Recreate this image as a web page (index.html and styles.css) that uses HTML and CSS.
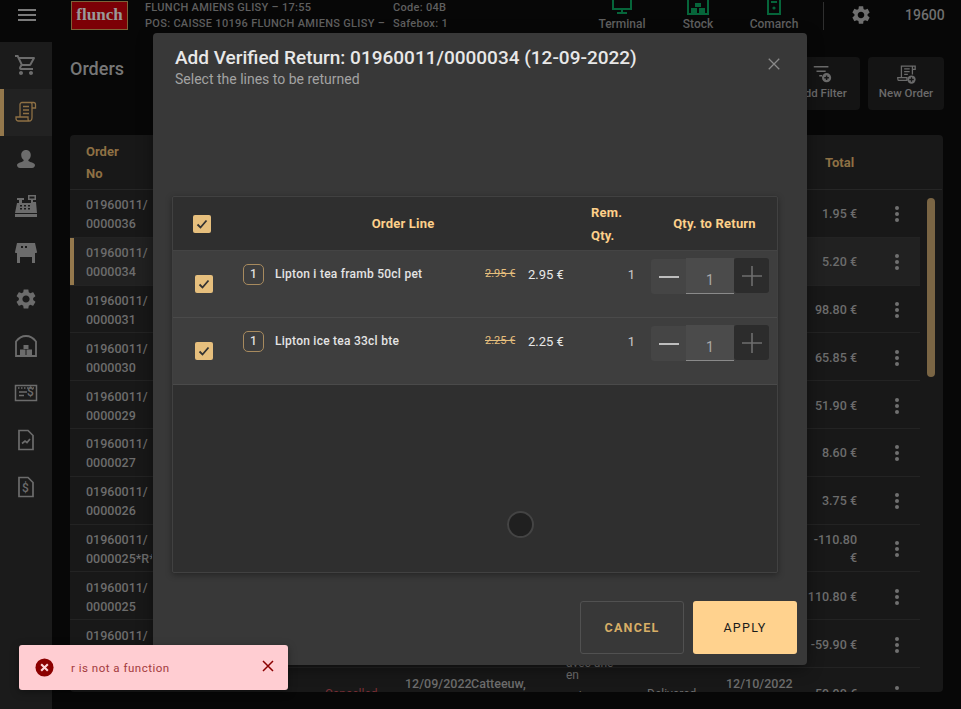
FILE: index.html
```html
<!DOCTYPE html>
<html lang="en">
<head>
<meta charset="utf-8">
<title>Orders</title>
<link rel="stylesheet" href="styles.css">
</head>
<body>
<div class="app">
  <header class="topbar">
    <div class="burger"><span></span><span></span><span></span></div>
    <div class="logo">flunch</div>
    <div class="pos">
      <div class="pos-line"><span class="pos-a">FLUNCH AMIENS GLISY – 17:55</span><span>Code: 04B</span></div>
      <div class="pos-line"><span class="pos-a">POS: CAISSE 10196 FLUNCH AMIENS GLISY –</span><span>Safebox: 1</span></div>
    </div>
    <div class="status-group">
      <div class="status">
        <svg class="status-icon" viewBox="0 0 24 24"><path d="M3 2h18v15H3zM12 17v3M7 21h10" fill="none" stroke="currentColor" stroke-width="2"/></svg>
        <span class="status-label">Terminal</span>
      </div>
      <div class="status">
        <svg class="status-icon" viewBox="0 0 24 24"><path d="M2 22V6l10-4 10 4v16z" fill="none" stroke="currentColor" stroke-width="2"/><path d="M9 11h6v4H9zM5 16h6v5H5zM13 16h6v5h-6z" fill="currentColor"/></svg>
        <span class="status-label">Stock Server</span>
      </div>
      <div class="status">
        <svg class="status-icon" viewBox="0 0 24 24"><path d="M6 1h12v21H6zM9 6h6M9 10h6" fill="none" stroke="currentColor" stroke-width="2"/><circle cx="12" cy="16" r="1.6" fill="currentColor"/></svg>
        <span class="status-label">Comarch Server</span>
      </div>
    </div>
    <div class="divider"></div>
    <svg class="top-gear" viewBox="0 0 24 24"><path fill="currentColor" d="M19.14 12.94c.04-.3.06-.61.06-.94 0-.32-.02-.64-.07-.94l2.03-1.58c.18-.14.23-.41.12-.61l-1.92-3.32c-.12-.22-.37-.29-.59-.22l-2.39.96c-.5-.38-1.03-.7-1.62-.94l-.36-2.54c-.04-.24-.24-.41-.48-.41h-3.84c-.24 0-.43.17-.47.41l-.36 2.54c-.59.24-1.13.57-1.62.94l-2.39-.96c-.22-.08-.47 0-.59.22L2.74 8.87c-.12.21-.08.47.12.61l2.03 1.58c-.05.3-.09.63-.09.94s.02.64.07.94l-2.03 1.58c-.18.14-.23.41-.12.61l1.92 3.32c.12.22.37.29.59.22l2.39-.96c.5.38 1.03.7 1.62.94l.36 2.54c.05.24.24.41.48.41h3.84c.24 0 .44-.17.47-.41l.36-2.54c.59-.24 1.13-.56 1.62-.94l2.39.96c.22.08.47 0 .59-.22l1.92-3.32c.12-.22.07-.47-.12-.61l-2.01-1.58zM12 15.6c-1.98 0-3.6-1.62-3.6-3.6s1.62-3.6 3.6-3.6 3.6 1.62 3.6 3.6-1.62 3.6-3.6 3.6z"/></svg>
    <div class="user">19600</div>
  </header>

  <div class="body">
    <nav class="sidebar">
      <div class="nav-item"><svg viewBox="0 0 24 24"><path fill="currentColor" d="M15.55 13c.75 0 1.41-.41 1.75-1.03l3.58-6.49c.37-.66-.11-1.48-.87-1.48H5.21l-.94-2H1v2h2l3.6 7.59-1.35 2.44C4.52 15.37 5.48 17 7 17h12v-2H7l1.1-2h7.45zM6.16 6h12.15l-2.76 5H8.53L6.16 6zM7 18c-1.1 0-1.99.9-1.99 2S5.9 22 7 22s2-.9 2-2-.9-2-2-2zm10 0c-1.1 0-1.99.9-1.99 2s.89 2 1.99 2 2-.9 2-2-.9-2-2-2z"/></svg></div>
      <div class="nav-item active"><svg viewBox="0 0 24 24" fill="none" stroke="currentColor" stroke-width="1.3"><path d="M6 17V4.500C6 3.400 6.900 2.500 8 2.500h11.500c1.200 0 2 .9 2 2V8H18V4.500c0-1-.6-2-1.500-2M18 4.500V17.500c0 2-1 3.500-3 3.500H4.500C3 21 2 20 2 18.500V17h12v1.500c0 1 .6 2.500 1.500 2.500"/><path d="M9 6.500h6M9 10h6M9 13.500h6"/></svg></div>
      <div class="nav-item"><svg viewBox="0 0 24 24"><path fill="currentColor" d="M12 3c3 0 4.800 2.300 4.800 5 0 2.200-1 4-2.500 5 0 1 .7 1.500 2 2 2.400.8 4.700 1.500 4.700 3 0 1.500-1 3-3 3H6c-2 0-3-1.500-3-3 0-1.500 2.300-2.200 4.700-3 1.300-.5 2-1 2-2-1.500-1-2.500-2.800-2.500-5C7.200 5.300 9 3 12 3z"/></svg></div>
      <div class="nav-item"><svg viewBox="0 0 24 24"><path fill="currentColor" d="M14 1h8v5h-3v2h3l1 11H1L3 9h2V6H3V4h7v2H8v3h9V6h-3zM15.500 2.500v2h5v-2zM6 11v1.500h2V11zM10 11v1.500h2V11zM14 11v1.500h2V11zM6 14v1.500h2V14zM10 14v1.500h2V14zM14 14v1.500h2V14zM1 20h22v3H1z"/></svg></div>
      <div class="nav-item"><svg viewBox="0 0 24 24"><path fill="currentColor" d="M3 2h18l2 9c0 .6-.5 1-1 1h-1v10h-3v-6H6v6H3V12H2c-.5 0-1-.4-1-1zM7 5v2h2V5zM11 5v2h2V5z"/></svg></div>
      <div class="nav-item"><svg viewBox="0 0 24 24"><path fill="currentColor" d="M19.14 12.94c.04-.3.06-.61.06-.94 0-.32-.02-.64-.07-.94l2.03-1.58c.18-.14.23-.41.12-.61l-1.92-3.32c-.12-.22-.37-.29-.59-.22l-2.39.96c-.5-.38-1.03-.7-1.62-.94l-.36-2.54c-.04-.24-.24-.41-.48-.41h-3.84c-.24 0-.43.17-.47.41l-.36 2.54c-.59.24-1.13.57-1.62.94l-2.39-.96c-.22-.08-.47 0-.59.22L2.74 8.87c-.12.21-.08.47.12.61l2.03 1.58c-.05.3-.09.63-.09.94s.02.64.07.94l-2.03 1.58c-.18.14-.23.41-.12.61l1.92 3.32c.12.22.37.29.59.22l2.39-.96c.5.38 1.03.7 1.62.94l.36 2.54c.05.24.24.41.48.41h3.84c.24 0 .44-.17.47-.41l.36-2.54c.59-.24 1.13-.56 1.62-.94l2.39.96c.22.08.47 0 .59-.22l1.92-3.32c.12-.22.07-.47-.12-.61l-2.01-1.58zM12 15.6c-1.98 0-3.6-1.62-3.6-3.6s1.62-3.6 3.6-3.6 3.6 1.62 3.6 3.6-1.62 3.6-3.6 3.6z"/></svg></div>
      <div class="nav-item"><svg viewBox="0 0 24 24"><path d="M2 22V7.500C5 3.500 8.500 2 12 2s7 1.500 10 5.500V22z" fill="none" stroke="currentColor" stroke-width="1.800"/><path d="M9.500 11h5v4h-5zM6 15.500h5.500V21H6zM12.500 15.500H18V21h-5.500z" fill="currentColor"/></svg></div>
      <div class="nav-item"><svg viewBox="0 0 24 24" fill="none" stroke="currentColor" stroke-width="1.500"><path d="M1.500 4.500h21v15h-21z"/><path d="M5 11h8M5 14.500h5"/><path d="M4 7h16" stroke-dasharray="1.500 1.500"/></svg><span class="nav-dollar">$</span></div>
      <div class="nav-item"><svg viewBox="0 0 24 24" fill="none" stroke="currentColor" stroke-width="1.700"><path d="M5 2.500h9l5 5v14H5z"/><path d="M8 15.500l3-2.500 2 1.500 3-3.500"/></svg></div>
      <div class="nav-item"><svg viewBox="0 0 24 24" fill="none" stroke="currentColor" stroke-width="1.700"><path d="M5 2.500h9l5 5v14H5z"/></svg><span class="nav-dollar doc">$</span></div>
    </nav>

    <main class="main">
      <div class="page-head">
        <h1 class="page-title">Orders</h1>
        <div class="head-actions">
          <button class="head-btn">
            <svg viewBox="0 0 24 24" fill="none" stroke="currentColor" stroke-width="1.600"><path d="M3 4h16M6 9h10M9 14h3"/><circle cx="17" cy="16" r="5" fill="currentColor" stroke="none"/><path d="M17 13.500v5M14.500 16h5" stroke="#151515"/></svg>
            <span>Add Filter</span>
          </button>
          <button class="head-btn">
            <svg viewBox="0 0 24 24" fill="none" stroke="currentColor" stroke-width="1.400"><path d="M7 16V3.500h12v9M19 3.500h3V7h-3M3 16h10v3H4c-1 0-1-3-1-3zM10 6.500h6M10 9.500h6M10 12.500h4"/><circle cx="18" cy="18" r="4.500" fill="currentColor" stroke="none"/><path d="M18 15.500v5M15.500 18h5" stroke="#151515"/></svg>
            <span>New Order</span>
          </button>
        </div>
      </div>

      <section class="card">
        <div class="orders-head">
          <div class="oh-order">Order<br>No</div>
          <div class="oh-total">Total</div>
        </div>
        <div class="row"><div class="order">01960011/<br>0000036</div><div class="total">1.95 €</div><div class="more"><i></i><i></i><i></i></div></div>
        <div class="row selected"><div class="order">01960011/<br>0000034</div><div class="total">5.20 €</div><div class="more"><i></i><i></i><i></i></div></div>
        <div class="row"><div class="order">01960011/<br>0000031</div><div class="total">98.80 €</div><div class="more"><i></i><i></i><i></i></div></div>
        <div class="row"><div class="order">01960011/<br>0000030</div><div class="total">65.85 €</div><div class="more"><i></i><i></i><i></i></div></div>
        <div class="row"><div class="order">01960011/<br>0000029</div><div class="total">51.90 €</div><div class="more"><i></i><i></i><i></i></div></div>
        <div class="row"><div class="order">01960011/<br>0000027</div><div class="total">8.60 €</div><div class="more"><i></i><i></i><i></i></div></div>
        <div class="row"><div class="order">01960011/<br>0000026</div><div class="total">3.75 €</div><div class="more"><i></i><i></i><i></i></div></div>
        <div class="row"><div class="order">01960011/<br>0000025*R*</div><div class="total">-110.80 €</div><div class="more"><i></i><i></i><i></i></div></div>
        <div class="row"><div class="order">01960011/<br>0000025</div><div class="total">110.80 €</div><div class="more"><i></i><i></i><i></i></div></div>
        <div class="row"><div class="order">01960011/<br>0000024</div><div class="total">-59.90 €</div><div class="more"><i></i><i></i><i></i></div></div>
        <div class="row row-last">
          <div class="order">01960011/<br>0000023</div>
          <div class="state">Cancelled</div>
          <div class="top-cell">12/09/2022</div>
          <div class="top-cell">Catteeuw,<br>Hugo</div>
          <div class="desc">avec une<br>en<span class="desc-more">caisse</span></div>
          <div class="plain">Delivered</div>
          <div class="top-cell">12/10/2022</div>
          <div class="total">59.90 €</div>
          <div class="more"><i></i><i></i><i></i></div>
        </div>
        <div class="scrollbar"></div>
      </section>
    </main>
  </div>

  <div class="modal">
    <div class="modal-head">
      <div>
        <h2 class="modal-title">Add Verified Return: 01960011/0000034 (12-09-2022)</h2>
        <p class="modal-sub">Select the lines to be returned</p>
      </div>
      <svg class="modal-close" viewBox="0 0 16 16"><path d="M2 2l12 12M14 2L2 14" stroke="currentColor" stroke-width="1.500" fill="none"/></svg>
    </div>

    <div class="lines">
      <div class="lines-grid lines-head">
        <div class="cell-check head-check"><span class="check"><svg viewBox="0 0 18 18"><path d="M4.500 9.500l3 3 6-7" fill="none" stroke="#333" stroke-width="1.800"/></svg></span></div>
        <div class="lh-center">Order Line</div>
        <div class="lh-rem">Rem.<br>Qty.</div>
        <div class="lh-center">Qty. to Return</div>
      </div>

      <div class="lines-grid line">
        <div class="cell-check"><span class="check"><svg viewBox="0 0 18 18"><path d="M4.500 9.500l3 3 6-7" fill="none" stroke="#333" stroke-width="1.800"/></svg></span></div>
        <div class="line-main">
          <span class="badge">1</span>
          <span class="line-name">Lipton i tea framb 50cl pet</span>
          <span class="old-price">2.95 €</span>
          <span class="price">2.95 €</span>
        </div>
        <div class="rem">1</div>
        <div class="qty">
          <button class="qty-btn minus"><svg viewBox="0 0 20 20"><path d="M0 10h20" stroke="currentColor" stroke-width="1.600"/></svg></button>
          <div class="qty-input">1</div>
          <button class="qty-btn plus"><svg viewBox="0 0 20 20"><path d="M0 10h20M10 0v20" stroke="currentColor" stroke-width="1.600"/></svg></button>
        </div>
      </div>

      <div class="lines-grid line">
        <div class="cell-check"><span class="check"><svg viewBox="0 0 18 18"><path d="M4.500 9.500l3 3 6-7" fill="none" stroke="#333" stroke-width="1.800"/></svg></span></div>
        <div class="line-main">
          <span class="badge">1</span>
          <span class="line-name">Lipton ice tea 33cl bte</span>
          <span class="old-price">2.25 €</span>
          <span class="price">2.25 €</span>
        </div>
        <div class="rem">1</div>
        <div class="qty">
          <button class="qty-btn minus"><svg viewBox="0 0 20 20"><path d="M0 10h20" stroke="currentColor" stroke-width="1.600"/></svg></button>
          <div class="qty-input">1</div>
          <button class="qty-btn plus"><svg viewBox="0 0 20 20"><path d="M0 10h20M10 0v20" stroke="currentColor" stroke-width="1.600"/></svg></button>
        </div>
      </div>
      <div class="spinner"></div>
    </div>

    <div class="modal-foot">
      <button class="btn btn-cancel">CANCEL</button>
      <button class="btn btn-apply">APPLY</button>
    </div>
  </div>

  <div class="toast">
    <svg class="toast-icon" viewBox="0 0 20 20"><circle cx="10" cy="10" r="9.500" fill="#8b0000"/><path d="M6.500 6.500l7 7M13.500 6.500l-7 7" stroke="#ffd5d8" stroke-width="2.200"/></svg>
    <span class="toast-text">r is not a function</span>
    <svg class="toast-close" viewBox="0 0 12 12"><path d="M1 1l10 10M11 1L1 11" stroke="#8b0000" stroke-width="1.500" fill="none"/></svg>
  </div>
</div>
</body>
</html>
```
FILE: styles.css
```css
* { box-sizing: border-box; }
html, body { margin: 0; height: 100%; }
body { background: #070707; font-family: Roboto, "Liberation Sans", sans-serif; overflow: hidden; color: #777; }
button { font-family: inherit; border: 0; padding: 0; }
h1, h2, p { margin: 0; }

.app { position: relative; width: 961px; height: 709px; overflow: hidden; }

/* Top bar */
.topbar { height: 42px; display: flex; align-items: flex-start; overflow: hidden; }
.burger { width: 18px; margin: 9px 0 0 18px; display: flex; flex-direction: column; gap: 3px; }
.burger span { height: 2px; background: #7b7b7b; }
.logo { width: 57px; height: 29px; margin: 1px 0 0 35px; background: #7c0006; border: 1px solid #7d6238; color: #999; font: 700 17px/26px "Liberation Serif", serif; text-align: center; }
.pos { margin-left: 17px; width: 421px; font-size: 11px; font-weight: 500; color: #5f5f5f; line-height: 16px; letter-spacing: .3px; }
.pos-line { display: flex; white-space: nowrap; }
.pos-a { width: 248px; }
.status-group { display: flex; margin-left: 18px; }
.status { width: 76px; display: flex; flex-direction: column; align-items: center; text-align: center; color: #5f5f5f; font-size: 12px; font-weight: 500; line-height: 14px; }
.status-label { max-width: 60px; }
.status-icon { width: 24px; height: 24px; margin-top: -8px; margin-bottom: 1px; color: #06653a; flex: none; }
.divider { width: 1px; height: 28px; background: #2f2f2f; margin: 2px 0 0 11px; }
.top-gear { width: 22px; height: 22px; margin: 4px 0 0 26px; color: #6f6f6f; flex: none; }
.user { margin: 7px 0 0 33px; font-size: 14px; font-weight: 500; color: #6f6f6f; }

.body { display: flex; height: 667px; }

/* Sidebar */
.sidebar { width: 52px; flex: none; background: #1b1b1b; }
.nav-item { height: 46.800px; display: flex; align-items: center; justify-content: center; color: #6c6c6c; position: relative; }
.nav-item svg { width: 24px; height: 24px; }
.nav-item.active { background: #222; color: #8e7044; box-shadow: inset 4px 0 0 #94784c; }
.nav-dollar { position: absolute; left: 27px; top: 14px; font-size: 12px; font-weight: 500; line-height: 16px; }
.nav-dollar.doc { left: 22px; top: 17px; }

/* Main */
.main { flex: 1; padding-left: 18px; padding-right: 18px; min-width: 0; }
.page-head { height: 93px; display: flex; justify-content: space-between; align-items: flex-start; }
.page-title { margin-top: 16px; font-size: 18px; line-height: 21px; font-weight: 500; color: #777; }
.head-actions { display: flex; gap: 8px; margin-top: 15px; margin-right: -1px; }
.head-btn { width: 76px; height: 53px; background: #141414; border-radius: 4px; color: #6a6a6a; font-size: 11.500px; font-weight: 500; display: flex; flex-direction: column; align-items: center; padding-top: 6px; line-height: 15px; }
.head-btn svg { width: 22px; height: 22px; margin-bottom: 1px; }

.card { position: relative; height: 557px; background: #181818; border-radius: 4px; overflow: hidden; }
.orders-head { height: 55px; position: relative; display: flex; justify-content: space-between; border-bottom: 1px solid #262626; color: #8e7044; font-size: 13px; font-weight: 700; margin-right: 1px; }
.oh-order { padding: 6px 0 0 16px; line-height: 22px; }
.oh-total { position: absolute; left: 755px; top: 20px; line-height: 16px; }

.row { height: 47.800px; margin-right: 23px; padding-top: 2px; display: grid; grid-template-columns: 82px 173px 80px 66px 95px 81px 79px 81px 50px 63px; align-items: center; border-bottom: 1px solid #232323; font-size: 12px; color: #6c6c6c; }
.row-last { height: 52px; }
.row.selected { background: #212121; box-shadow: inset 4px 0 0 #94784c; }
.order { grid-column: 1; padding-left: 16px; font-size: 12.500px; font-weight: 500; line-height: 19px; white-space: nowrap; overflow: hidden; }
.total { grid-column: 9; text-align: right; font-size: 12.500px; font-weight: 500; line-height: 18px; }
.more { grid-column: 10; margin-left: 38px; width: 6px; display: flex; flex-direction: column; gap: 2px; }
.more i { width: 4px; height: 4px; border-radius: 50%; background: #707070; }
.state { grid-column: 3; color: #7a2e35; }
.top-cell { align-self: start; margin-top: 6px; font-size: 12.500px; font-weight: 500; line-height: 16px; }
.desc { align-self: start; margin-top: -13px; font-size: 12px; line-height: 12px; }
.desc-more { display: block; margin-top: 9px; }
.plain { font-size: 12px; }
.scrollbar { position: absolute; left: 857px; top: 63px; width: 8px; height: 179px; background: #7a6544; border-radius: 4px; }

/* Modal */
.modal { position: absolute; left: 153px; top: 33px; width: 654px; height: 632px; background: #383838; border-radius: 4px; display: flex; flex-direction: column; box-shadow: 0 4px 16px rgba(0,0,0,.4); }
.modal-head { height: 163px; padding: 14px 26px 0 22px; display: flex; justify-content: space-between; align-items: flex-start; }
.modal-title { font-size: 19px; line-height: 22px; font-weight: 500; color: #e8e8e8; white-space: nowrap; }
.modal-sub { font-size: 14px; line-height: 20px; color: #a3a3a3; }
.modal-close { width: 14px; height: 14px; margin-top: 10px; color: #8a8a8a; flex: none; }

.lines { position: relative; margin: 0 29px 0 19px; height: 377px; background: #2f2f2f; border: 1px solid #414141; border-radius: 2px; box-shadow: 0 2px 6px rgba(0,0,0,.35); }
.lines-grid { display: grid; grid-template-columns: 57px 346px 75px 127px; }
.lines-head { height: 54px; align-items: center; border-bottom: 1px solid #444; color: #fdd08a; font-size: 13px; font-weight: 700; letter-spacing: .2px; }
.lh-center { text-align: center; }
.lh-rem { padding-left: 15px; line-height: 23px; }
.line { height: 67px; background: #3e3e3e; border-bottom: 1px solid #4a4a4a; }
.cell-check { display: flex; justify-content: center; padding-left: 5px; padding-top: 24px; }
.head-check { padding: 0; }
.check { display: block; width: 18px; height: 18px; background: #e6bf7d; border-radius: 2px; }
.check svg { display: block; width: 18px; height: 18px; }
.line-main { display: flex; align-items: flex-start; padding: 13px 0 0 13px; }
.badge { width: 21px; height: 21px; border: 1px solid #a78a5e; border-radius: 5px; text-align: center; font-size: 12px; font-weight: 500; line-height: 19px; color: #ddd; flex: none; }
.line-name { width: 210px; margin-left: 11px; font-size: 12px; font-weight: 500; line-height: 21px; letter-spacing: .25px; color: #e4e4e4; white-space: nowrap; }
.old-price { width: 43px; font-size: 11px; line-height: 20px; color: #e6bf7d; text-decoration: line-through; white-space: nowrap; }
.price { font-size: 13px; line-height: 21px; color: #e8e8e8; white-space: nowrap; }
.rem { padding: 13px 16px 0 0; text-align: right; font-size: 13px; line-height: 21px; color: #c9c9c9; }
.qty { display: flex; align-items: flex-start; padding: 8px 0 0 0; }
.qty-btn { width: 35px; height: 35px; display: flex; align-items: center; justify-content: center; border-radius: 3px; }
.qty-btn svg { width: 20px; height: 20px; display: block; }
.minus { background: #454545; color: #dcdcdc; border-radius: 3px 0 0 3px; }
.plus { background: #2c2c2c; color: #6e6e6e; margin-top: -1px; }
.qty-input { width: 48px; height: 36px; margin-top: -1px; background: #4b4b4b; border-bottom: 1px solid #8a8a8a; color: #a9a9a9; font-size: 14px; text-align: center; padding-top: 14px; line-height: 17px; }
.spinner { position: absolute; left: 334px; top: 314px; width: 27px; height: 27px; border-radius: 50%; background: #202020; border: 2px solid #444; }

.modal-foot { display: flex; justify-content: flex-end; gap: 9px; padding: 28px 10px 0 0; }
.btn { width: 104px; height: 53px; border-radius: 3px; font-size: 12.500px; letter-spacing: 1.300px; }
.btn-cancel { background: transparent; border: 1px solid #515151; color: #d8ae66; font-weight: 700; }
.btn-apply { background: #ffd28e; color: #1b1b1b; font-weight: 400; }

/* Toast */
.toast { position: absolute; left: 19px; top: 645px; width: 269px; height: 45px; background: #ffcdd2; border-radius: 3px; display: flex; align-items: center; box-shadow: 0 2px 8px rgba(0,0,0,.35); }
.toast-icon { width: 19px; height: 19px; margin-left: 16px; }
.toast-text { margin-left: 17px; font-size: 11.500px; letter-spacing: .5px; color: #a33a3c; width: 180px; }
.toast-close { width: 12px; height: 12px; margin-left: 11px; margin-top: -3px; }
```
